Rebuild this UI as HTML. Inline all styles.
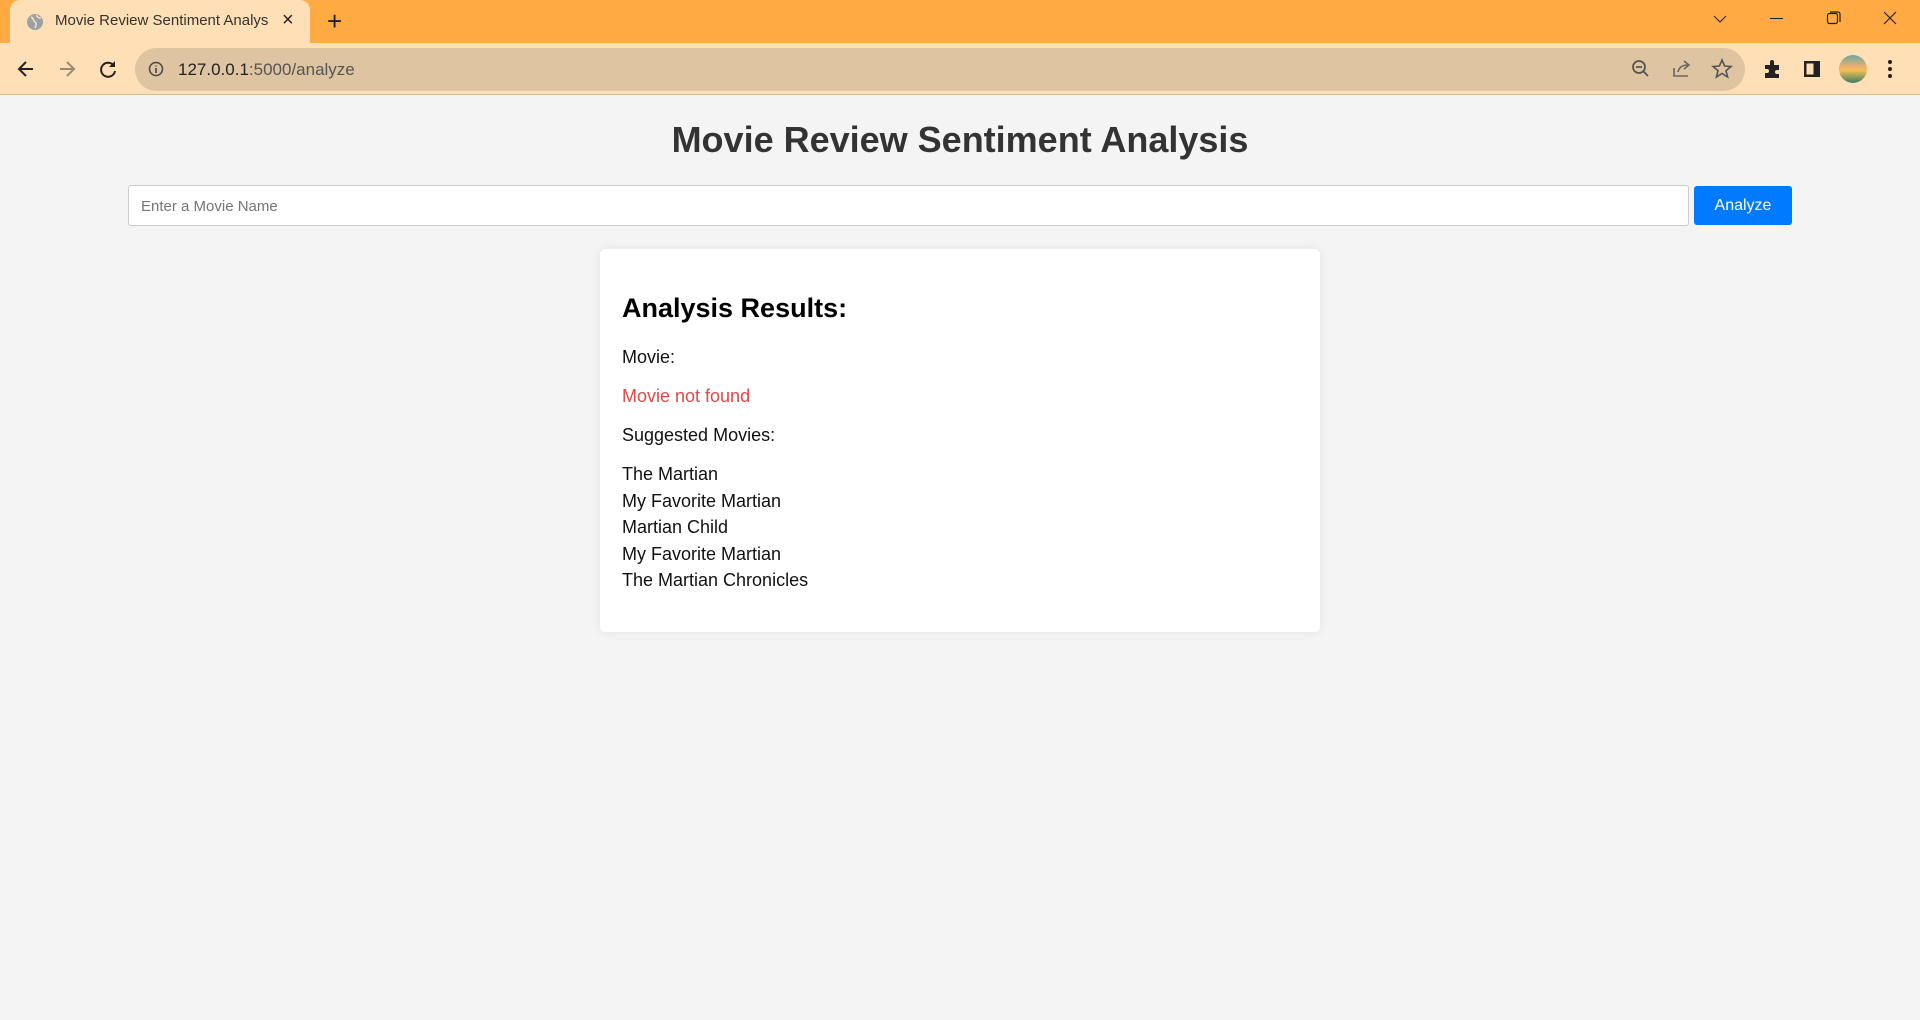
<!DOCTYPE html>
<html><head><meta charset="utf-8"><style>
*{margin:0;padding:0;box-sizing:border-box}
body{width:1920px;height:1020px;overflow:hidden;background:#f4f4f4;font-family:"Liberation Sans",Arial,sans-serif;position:relative}
.abs{position:absolute}
.tabbar{left:0;top:0;width:1920px;height:43px;background:#ffaa42}
.tab{left:10px;top:0;width:300px;height:43px;background:#ffdfb5;border-radius:10px 10px 0 0}
.toolbar{left:0;top:43px;width:1920px;height:52px;background:#ffdfb5;border-bottom:1px solid #d8b98c}
.omni{left:135px;top:48px;width:1610px;height:43px;background:#dfc4a1;border-radius:22px}
.t{font-size:15px;color:#222;white-space:nowrap}
h1{position:absolute;left:0;width:1920px;top:119px;text-align:center;font-size:36px;font-weight:bold;color:#333}
.inp{left:128px;top:185px;width:1561px;height:41px;background:#fff;border:1px solid #ccc;border-radius:3px;font-size:15px;color:#757575;padding:12px 0 0 12px}
.btn{left:1694px;top:186px;width:98px;height:39px;background:#007bff;border-radius:3px;color:#fff;font-size:16px;text-align:center;line-height:40px}
.card{left:600px;top:249px;width:720px;height:383px;background:#fff;border-radius:5px;box-shadow:0 0 10px rgba(0,0,0,.08)}
.c{left:622px;font-size:18px;color:#111;white-space:nowrap}
</style></head><body>
<div class="abs tabbar"></div>
<div class="abs tab"></div>
<svg class="abs" style="left:25px;top:12px" width="20" height="20"><circle cx="10" cy="10" r="8" fill="#9aa0a6"/><path d="M6 5c3 1 2 4 4 5s1 4 0 6M12 3c-1 2 2 3 4 3" stroke="#ffdfb5" stroke-width="1.5" fill="none"/></svg>
<div class="abs t" style="left:55px;top:12px;width:213px;overflow:hidden;color:#333">Movie Review Sentiment Analysis</div>
<div class="abs t" style="left:282px;top:9px;font-size:20px">×</div>
<div class="abs t" style="left:327px;top:6px;font-size:26px;font-weight:300">+</div>
<svg class="abs" style="left:1710px;top:12px" width="20" height="14"><path d="M4 4l6 6 6-6" stroke="#333" fill="none" stroke-width="1.2"/></svg>
<div class="abs" style="left:1770px;top:18px;width:13px;height:1px;background:#222"></div>
<svg class="abs" style="left:1826px;top:10px" width="16" height="16"><rect x="1.5" y="3.5" width="10" height="10" rx="2" fill="none" stroke="#222" stroke-width="1.2"/><path d="M4 2h8a2 2 0 0 1 2 2v8" fill="none" stroke="#222" stroke-width="1.2"/></svg>
<svg class="abs" style="left:1882px;top:10px" width="16" height="16"><path d="M2 2l12 12M14 2L2 14" stroke="#222" stroke-width="1.2"/></svg>
<div class="abs toolbar"></div>
<div class="abs omni"></div>
<svg class="abs" style="left:15px;top:58px" width="22" height="22"><path d="M18 11H5M11 4l-7 7 7 7" stroke="#222" stroke-width="2" fill="none"/></svg>
<svg class="abs" style="left:56px;top:58px" width="22" height="22"><path d="M4 11h13M11 4l7 7-7 7" stroke="#9a8a74" stroke-width="2" fill="none"/></svg>
<svg class="abs" style="left:97px;top:58px" width="22" height="22"><path d="M17 8A7 7 0 1 0 18 13" stroke="#222" stroke-width="2" fill="none"/><path d="M18 3v6h-6" fill="#222"/></svg>
<svg class="abs" style="left:148px;top:61px" width="16" height="16"><circle cx="8" cy="8" r="6.5" stroke="#444" stroke-width="1.5" fill="none"/><path d="M8 7v5M8 4.5v1" stroke="#444" stroke-width="1.6"/></svg>
<div class="abs t" style="left:178px;top:60px;font-size:17px;color:#222">127.0.0.1<span style="color:#555">:5000/analyze</span></div>
<svg class="abs" style="left:1630px;top:58px" width="22" height="22"><circle cx="9" cy="9" r="6" stroke="#555" stroke-width="1.8" fill="none"/><path d="M6 9h6M13 13l5 5" stroke="#555" stroke-width="1.8"/></svg>
<svg class="abs" style="left:1671px;top:58px" width="22" height="22"><path d="M3 10v8h14M7 14c1-5 5-7 10-7M13 3l5 4-5 4" stroke="#666" stroke-width="1.6" fill="none"/></svg>
<svg class="abs" style="left:1711px;top:58px" width="22" height="22"><path d="M11 2l2.6 6 6.4.5-5 4.2 1.6 6.3L11 15.5 5.4 19 7 12.7 2 8.5 8.4 8z" stroke="#555" stroke-width="1.6" fill="none"/></svg>
<svg class="abs" style="left:1762px;top:58px" width="22" height="22"><path d="M3 7h5V4a2 2 0 0 1 4 0v3h5v5h-2a2 2 0 0 0 0 4h2v4H3v-5h2a2 2 0 0 0 0-4H3z" fill="#222"/></svg>
<svg class="abs" style="left:1802px;top:59px" width="20" height="20"><rect x="2" y="2" width="16" height="16" fill="#222"/><rect x="4.5" y="4.5" width="7" height="11" fill="#ffdfb5"/></svg>
<div class="abs" style="left:1839px;top:55px;width:28px;height:28px;border-radius:50%;background:linear-gradient(#6aa9a5,#f5b06a 45%,#f0c050 55%,#3c7a6a)"></div>
<svg class="abs" style="left:1886px;top:58px" width="8" height="22"><circle cx="4" cy="4" r="2" fill="#222"/><circle cx="4" cy="11" r="2" fill="#222"/><circle cx="4" cy="18" r="2" fill="#222"/></svg>

<h1>Movie Review Sentiment Analysis</h1>
<div class="abs inp">Enter a Movie Name</div>
<div class="abs btn">Analyze</div>
<div class="abs card"></div>
<div class="abs c" style="top:293px;font-size:27px;font-weight:bold;color:#000">Analysis Results:</div>
<div class="abs c" style="top:347px">Movie:</div>
<div class="abs c" style="top:386px;color:#e04848">Movie not found</div>
<div class="abs c" style="top:425px">Suggested Movies:</div>
<div class="abs c" style="top:461px;line-height:26.6px">The Martian<br>My Favorite Martian<br>Martian Child<br>My Favorite Martian<br>The Martian Chronicles</div>
</body></html>
